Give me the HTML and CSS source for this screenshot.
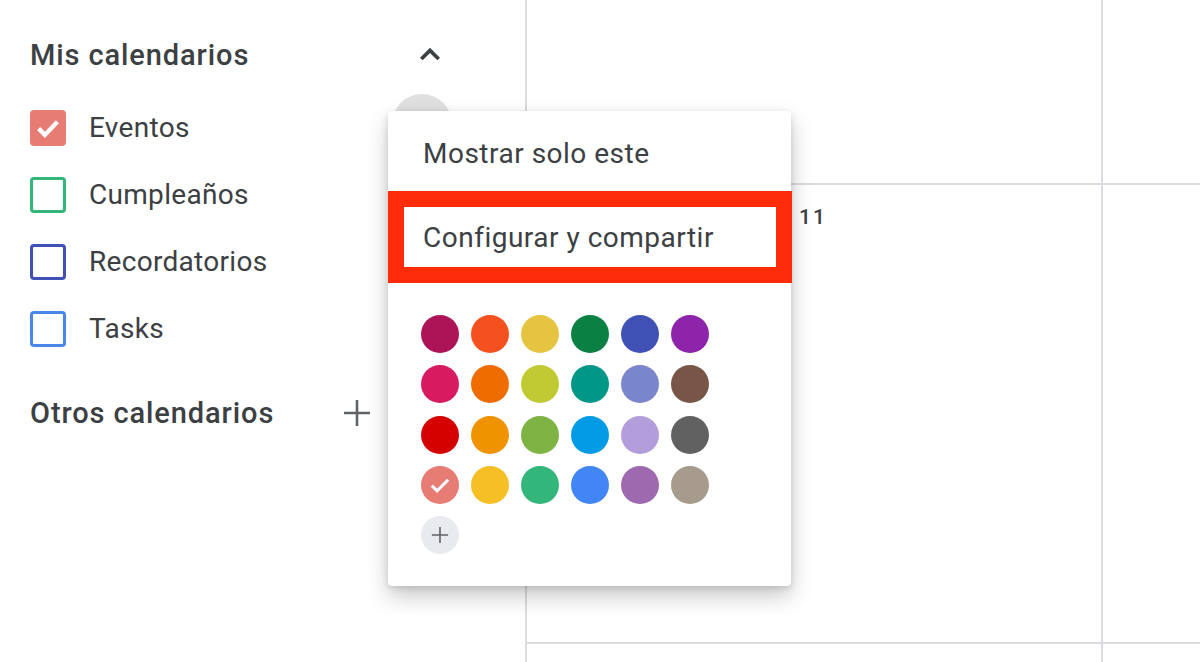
FILE: index.html
```html
<!DOCTYPE html>
<html lang="es">
<head>
<meta charset="utf-8">
<title>Calendario</title>
<link rel="stylesheet" href="styles.css">
</head>
<body>
<div class="app">
  <aside class="sidebar">
    <div class="section-head">
      <span class="section-title">Mis calendarios</span>
      <svg class="chevron" viewBox="0 0 24 24" width="32" height="32"><path d="M5.5 15l6.5-6.5 6.5 6.5" fill="none" stroke="#3c4043" stroke-width="2.8"/></svg>
    </div>
    <ul class="cal-list">
      <li class="cal-item">
        <span class="box checked" style="--c:#e67c73">
          <svg viewBox="0 0 24 24" width="32" height="32"><path d="M4.5 12.5l5 5L19.5 7" fill="none" stroke="#fff" stroke-width="3.4"/></svg>
        </span>
        <span class="cal-name">Eventos</span>
        <span class="hover-dot"></span>
      </li>
      <li class="cal-item"><span class="box" style="--c:#33b679"></span><span class="cal-name">Cumpleaños</span></li>
      <li class="cal-item"><span class="box" style="--c:#3f51b5"></span><span class="cal-name">Recordatorios</span></li>
      <li class="cal-item"><span class="box" style="--c:#4a86e8"></span><span class="cal-name">Tasks</span></li>
    </ul>
    <div class="section-head other">
      <span class="section-title">Otros calendarios</span>
      <svg class="plus" viewBox="0 0 28 28" width="28" height="28"><path d="M14 1v26M1 14h26" stroke="#5f6368" stroke-width="2.6"/></svg>
    </div>
  </aside>
  <main class="grid">
    <div class="cell c1"></div>
    <div class="cell c2"></div>
    <div class="cell c3"><span class="day">11</span></div>
    <div class="cell c4"></div>
    <div class="cell c5"></div>
    <div class="cell c6"></div>
  </main>

  <div class="menu">
    <div class="menu-item">Mostrar solo este</div>
    <div class="menu-item highlight">Configurar y compartir</div>
    <div class="swatches">
      <span class="sw" style="background:#ad1457"></span>
      <span class="sw" style="background:#f4511e"></span>
      <span class="sw" style="background:#e4c441"></span>
      <span class="sw" style="background:#0b8043"></span>
      <span class="sw" style="background:#3f51b5"></span>
      <span class="sw" style="background:#8e24aa"></span>
      <span class="sw" style="background:#d81b60"></span>
      <span class="sw" style="background:#ef6c00"></span>
      <span class="sw" style="background:#c0ca33"></span>
      <span class="sw" style="background:#009688"></span>
      <span class="sw" style="background:#7986cb"></span>
      <span class="sw" style="background:#795548"></span>
      <span class="sw" style="background:#d50000"></span>
      <span class="sw" style="background:#f09300"></span>
      <span class="sw" style="background:#7cb342"></span>
      <span class="sw" style="background:#039be5"></span>
      <span class="sw" style="background:#b39ddb"></span>
      <span class="sw" style="background:#616161"></span>
      <span class="sw sel" style="background:#e67c73"><svg viewBox="0 0 24 24" width="28" height="28"><path d="M5 12.5l4.5 4.5L19 7.5" fill="none" stroke="#fff" stroke-width="2.6"/></svg></span>
      <span class="sw" style="background:#f6bf26"></span>
      <span class="sw" style="background:#33b679"></span>
      <span class="sw" style="background:#4285f4"></span>
      <span class="sw" style="background:#9e69af"></span>
      <span class="sw" style="background:#a79b8e"></span>
      <span class="sw add"><svg viewBox="0 0 20 20" width="18" height="18"><path d="M10 1v18M1 10h18" stroke="#5f6368" stroke-width="1.8"/></svg></span>
    </div>
  </div>
</div>
</body>
</html>
```

FILE: styles.css
```css
* { box-sizing: border-box; }
html, body { margin: 0; padding: 0; background: #fff; }
body {
  font-family: Roboto, "Liberation Sans", Arial, sans-serif;
  color: #3c4043;
  width: 1200px;
  height: 662px;
  overflow: hidden;
}
.app {
  position: relative;
  display: flex;
  width: 1200px;
  height: 662px;
}
.sidebar {
  width: 525px;
  flex: none;
  padding: 31px 0 0 30px;
}
.section-head {
  display: flex;
  align-items: center;
  width: 422px;
  height: 48px;
}
.section-title {
  font-size: 29px;
  font-weight: 500;
  letter-spacing: 0.9px;
  color: #3c4043;
  flex: 1;
}
.chevron { margin-right: 6px; }
.cal-list {
  list-style: none;
  margin: 15px 0 0 0;
  padding: 0;
}
.cal-item {
  display: flex;
  align-items: center;
  height: 67px;
  width: 422px;
}
.box {
  width: 36px;
  height: 36px;
  border: 3px solid var(--c);
  border-radius: 4px;
  display: flex;
  align-items: center;
  justify-content: center;
  flex: none;
}
.box.checked { background: var(--c); }
.cal-name {
  margin-left: 23px;
  font-size: 28px;
  letter-spacing: 0.3px;
  color: #3c4043;
  flex: 1;
}
.hover-dot {
  width: 60px;
  height: 60px;
  border-radius: 50%;
  background: #e0e0e0;
  margin-top: -8px;
}
.section-head.other { margin-top: 27px; width: 341px; }
.plus { flex: none; }

.grid {
  flex: 1;
  display: grid;
  grid-template-columns: 576px 1fr;
  grid-template-rows: 185px 459px 1fr;
  border-left: 2px solid #dadce0;
}
.cell { border-right: 2px solid #dadce0; border-bottom: 2px solid #dadce0; }
.c2, .c4, .c6 { border-right: none; }
.c5, .c6 { border-bottom: none; }
.day {
  display: block;
  margin: 20px 0 0 272px;
  font-size: 21px;
  font-weight: 500;
  letter-spacing: 2px;
  color: #3c4043;
}

.menu {
  position: absolute;
  left: 388px;
  top: 111px;
  width: 403px;
  height: 475px;
  background: #fff;
  border-radius: 4px;
  box-shadow: 0 10px 22px rgba(0,0,0,0.22), 0 2px 6px rgba(0,0,0,0.12);
}
.menu-item {
  font-size: 28px;
  letter-spacing: 0.5px;
  color: #3c4043;
  padding-left: 35px;
  height: 82px;
  padding-top: 2px;
  display: flex;
  align-items: center;
}
.menu-item.highlight {
  height: 92px;
  border: 16px solid #fe2c08;
  padding-left: 19px;
  padding-top: 0;
  margin-right: -1px;
  margin-top: -2px;
}
.swatches {
  display: grid;
  grid-template-columns: repeat(6, 38px);
  grid-auto-rows: 38px;
  column-gap: 12px;
  row-gap: 12.3px;
  padding: 32px 0 0 33px;
}
.sw {
  width: 38px;
  height: 38px;
  border-radius: 50%;
  display: flex;
  align-items: center;
  justify-content: center;
}
.sw.add { background: #e8eaed; }
```
